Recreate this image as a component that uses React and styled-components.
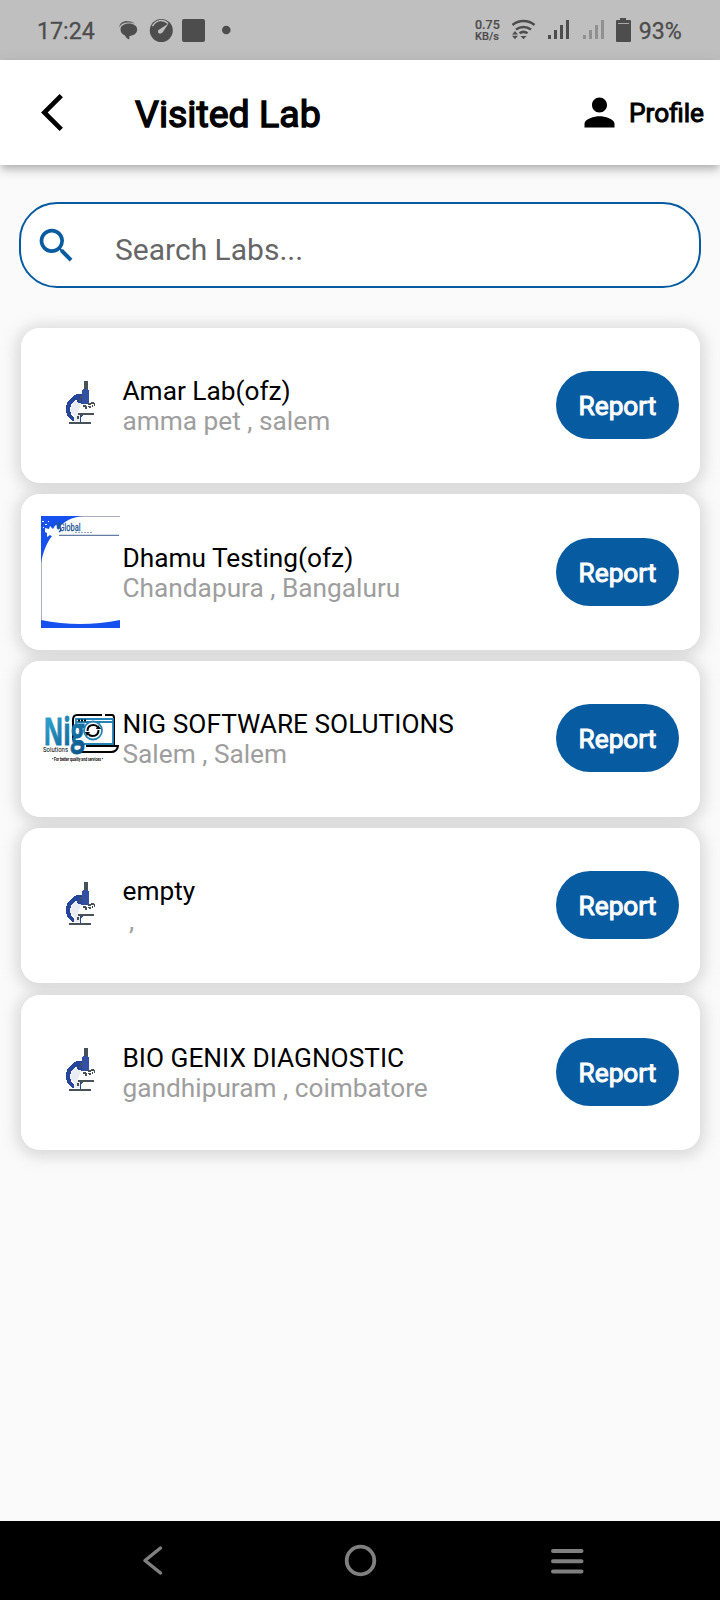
/**
 *
 * Visited Lab
 *
 */

import React from 'react';

import styled, { createGlobalStyle } from 'styled-components';

const GlobalStyle = createGlobalStyle`
  * {
    box-sizing: border-box;
  }

  body {
    margin: 0;
    background: #fafafa;
    font-family: Roboto, sans-serif;
  }

  svg {
    display: block;
    flex: none;
  }
`;

const Screen = styled.div`
  display: flex;
  flex-direction: column;
  width: 720px;
  height: 1600px;
  overflow: hidden;
  background: #fafafa;
`;

const StatusBar = styled.div`
  display: flex;
  flex: none;
  align-items: center;
  justify-content: space-between;
  height: 60px;
  padding: 0 38px 0 37px;
  background: #bfbfbf;
  color: #4d4d4d;
`;

const StatusGroup = styled.div`
  display: flex;
  align-items: center;
`;

const StatusText = styled.span`
  width: ${({ $width }) => $width}px;
  padding-top: 2px;
  font-size: 23.2px;
  line-height: 28px;
  white-space: nowrap;
  -webkit-text-stroke: 0.3px #4d4d4d;
`;

const NetSpeed = styled.div`
  width: 37px;
  font-size: 12.5px;
  font-weight: 500;
  line-height: 12px;
  -webkit-text-stroke: 0.2px #4d4d4d;

  small {
    display: block;
    font-size: 11px;
    line-height: 11px;
  }
`;

const Header = styled.header`
  position: relative;
  display: flex;
  flex: none;
  align-items: center;
  height: 105px;
  padding: 0 16px 0 41px;
  background: #fff;
  box-shadow: 0 4px 7px -2px rgba(0, 0, 0, 0.2),
    0 7px 9px rgba(0, 0, 0, 0.1), 0 2px 16px rgba(0, 0, 0, 0.08);
`;

const Title = styled.h1`
  flex: 1;
  margin: 3px 0 0 72px;
  font-size: 37.5px;
  font-weight: 400;
  line-height: 44px;
  -webkit-text-stroke: 1.4px #000;
`;

const ProfileButton = styled.button`
  display: flex;
  align-items: center;
  gap: 6.5px;
  padding: 0;
  border: 0;
  background: none;
  font-family: inherit;
  font-size: 26.25px;
  color: #000;
  -webkit-text-stroke: 1px #000;
`;

const SearchBox = styled.label`
  display: flex;
  flex: none;
  align-items: center;
  width: 682px;
  height: 86px;
  margin: 37px 0 0 19px;
  padding-left: 13px;
  border: 2px solid #075ba1;
  border-radius: 38px;
  background: #fff;
`;

const SearchPlaceholder = styled.span`
  margin: 10px 0 0 36px;
  font-size: 30px;
  line-height: 36px;
  color: #666;
`;

const LabList = styled.main`
  position: relative;
  z-index: 0;
  display: flex;
  flex: 1;
  flex-direction: column;
  gap: 11.25px;
  padding: 39.5px 20.5px 0 20.5px;
`;

const Card = styled.article`
  position: relative;
  display: flex;
  flex: none;
  align-items: center;
  height: 155.5px;
  padding: 0 20.5px;
  border-radius: 19px;
  background: #fff;

  /* shadow stays below the neighbouring cards */
  &::before {
    content: '';
    position: absolute;
    inset: 0;
    z-index: -1;
    border-radius: 19px;
    box-shadow: 0 2px 14px 5px rgba(158, 158, 158, 0.34);
  }
`;

const Logo = styled.div`
  display: flex;
  flex: none;
  align-items: center;
  justify-content: center;
  width: 79px;
  height: 114px;
  margin-right: 2.5px;
`;

const LabInfo = styled.div`
  flex: 1;
  padding-top: 1.4px;
  font-size: 26.25px;
  line-height: 30px;
  white-space: pre;
`;

const LabName = styled.div`
  color: #000;
`;

const LabPlace = styled.div`
  color: #9e9e9e;
`;

const ReportButton = styled.button`
  width: 123px;
  height: 68px;
  margin-top: -0.6px;
  padding: 2px 0 0;
  border: 0;
  border-radius: 34px;
  background: #075ba1;
  font-family: inherit;
  font-size: 26.25px;
  color: #fff;
  -webkit-text-stroke: 1px #fff;
`;

const NavBar = styled.nav`
  display: flex;
  flex: none;
  align-items: center;
  justify-content: space-between;
  height: 79px;
  padding: 0 134px;
  background: #000;
`;

function NotificationIcons() {
  return (
    <svg width="114" height="26" viewBox="118 17 114 26" fill="#4d4d4d">
      <path
        d="M119.500 27.500c-.5-4 3-6.500 7.500-6.500 3.500 0 6 1 7.500 2.500-3.500-1-7-1.500-10.500-.3-2.500.8-4 2.300-4.500 4.300z"
        opacity=".85"
      />
      <path d="M120.500 29.500c0-3.500 3.500-6 8.500-6 4.500 0 8.200 2.500 8.200 6s-3.200 6-7.700 6.500l-.3 3.500c-2.200-1-3.700-2.500-4.200-4-2.500-1-4.500-3-4.500-6z" />
      <circle cx="161.300" cy="30.500" r="11.500" />
      <path
        d="M152.500 26c4-6.500 11-7 15.500-2.500"
        fill="none"
        stroke="#bfbfbf"
        strokeWidth="1.500"
      />
      <path
        d="M168.500 23.500l-10 6.500c-2 3 1.500 5 4 2.500z"
        fill="#bfbfbf"
      />
      <rect x="182" y="19" width="23" height="23" rx="2" />
      <circle cx="226.300" cy="30" r="4.300" />
    </svg>
  );
}

function ConnectionIcons() {
  return (
    <svg width="122" height="26" viewBox="512 17 122 26" fill="#4d4d4d">
      <g fill="none" stroke="#4d4d4d" strokeWidth="2.500">
        <path d="M512.500 25c6-5.300 16-5.300 22 0" />
        <path d="M516 29.500c4.500-3.500 10.500-3.500 15 0" />
        <path d="M519.500 33.300c2.500-1.800 5.500-1.800 8 0" />
      </g>
      <path d="M512 34.500l3-3.500 3 3.500zM512 35.700h6l-3 3.500zM520.500 36h6l-3 3.300z" />
      <path d="M548 35h3v4h-3zM554 30h3v9h-3zM560 25h3v14h-3zM566 20h3v19h-3z" />
      <path
        d="M583 35h3v4h-3zM589 30h3v9h-3zM595 25h3v14h-3zM601 20h3v19h-3z"
        fill="#909090"
      />
      <path d="M620 18h6v2h4q1 0 1 1v20q0 1-1 1h-13q-1 0-1-1V21q0-1 1-1h3z" />
      <path d="M618 23.500h11" stroke="#aaa" strokeWidth="1" />
    </svg>
  );
}

function MicroscopeLogo() {
  return (
    <svg
      width="31"
      height="48"
      viewBox="65 381 31 48"
      shapeRendering="crispEdges"
    >
      <path d="M73 402l5-2 3 4-3 8v3l3 1v5h-8l2-4-5-6z" fill="#e9ecf2" />
      <path
        d="M82 394h-5l-5 3-4 4-2 5v6l2 5 4 4h2v-3l-3-4-1-4 1-5 3-4 4-2h4z"
        fill="#25459b"
      />
      <path d="M84 381h4v8h-4z" fill="#465158" />
      <path d="M83 389h5l1 2v13h-7v-13z" fill="#3450a2" />
      <path d="M77 396l5-1v9l-5-2z" fill="#25459b" />
      <path d="M80 396h2v2h-2zM79 399h2v2h-2z" fill="#465158" />
      <path
        d="M83 405h3v1h1v3h-2v-2h-2zM87 403h4v2h-3zM88 406h3v2h-2v-1h-1zM91 402h3v1h1v3h-1v-2h-3zM92 405h1v2h-1z"
        fill="#465158"
      />
      <path d="M78 413h16v2H83l-1 2h-2v-2h-2zM69 422h22v2H69z" fill="#465158" />
      <path d="M80 415h1v7h-1z" fill="#25459b" />
      <path d="M77 416h2v3h-2z" fill="#465158" />
    </svg>
  );
}

function GlobalLogo() {
  return (
    <svg width="79" height="112" viewBox="0 0 79 112">
      <path d="M.5 0v112M0 .5h79" stroke="#aab0bd" strokeWidth="1" />
      <path
        d="M0 0h42C32 1 26 4 20 9l-3 6-5 4C5 27 2 37 0 47z"
        fill="#1650ee"
      />
      <path
        d="M4 12l4 1 1-3 3 3 3-5 2 6 3-2 1 5-4 3-5 1-3-2-3 2v-4l-2-1z"
        fill="#fff"
      />
      <path
        d="M1 5h2v1H1zM4 8h2v1H4zM2 11h1v1H2zM7 5h1v1H7z"
        fill="#fff"
      />
      <path
        d="M14 9c4-5 5 1 2 3 5-1 5 2 2 4"
        fill="none"
        stroke="#1d55a4"
        strokeWidth="1.500"
      />
      <text
        x="18.500"
        y="14.500"
        fontSize="10.500"
        textLength="21"
        lengthAdjust="spacingAndGlyphs"
        fill="#245796"
        stroke="#245796"
        strokeWidth=".3"
      >
        Global
      </text>
      <path d="M34 16.500h18" stroke="#8eabc8" strokeDasharray="2 1" />
      <path d="M18 19.300h60" stroke="#3e5a8e" />
      <path d="M0 104q39 8 79 0v8H0z" fill="#1650ee" />
    </svg>
  );
}

function NigLogo() {
  return (
    <svg width="79" height="56" viewBox="41 711 79 56">
      <defs>
        <linearGradient id="nig" x1="0" y1="0" x2="1" y2="1">
          <stop offset="0" stopColor="#35b2dc" />
          <stop offset="1" stopColor="#064f83" />
        </linearGradient>
      </defs>
      <path
        d="M73 740v-20q0-5 4-5h25M105 715h7q2 0 2 3v28M80 752h31q6 0 7-6H86"
        fill="none"
        stroke="#000"
        strokeWidth="2"
      />
      <path
        d="M76 727v-8h37v25H84M76 722h37"
        fill="none"
        stroke="#2482b5"
        strokeWidth="1.800"
      />
      <path d="M78 720.500h8" stroke="#000" strokeWidth="2" strokeDasharray="2 1" />
      <circle
        cx="93"
        cy="730.500"
        r="9"
        fill="#fff"
        stroke="#2482b5"
        strokeWidth="1.800"
      />
      <path
        d="M87.500 731q0-6 6-6 3 0 4 2M98.500 730q0 6-6 6-3 0-4-2"
        fill="none"
        stroke="#000"
        strokeWidth="2"
      />
      <path d="M96 729h5l-3-4zM85 732h5l-3 4z" />
      <text
        x="43.500"
        y="744.500"
        fontFamily="Open Sans, sans-serif"
        fontSize="38"
        fontWeight="700"
        textLength="41"
        lengthAdjust="spacingAndGlyphs"
        fill="url(#nig)"
        stroke="url(#nig)"
        strokeWidth=".8"
      >
        Nig
      </text>
      <text x="43" y="752" fontSize="7.500" textLength="25" lengthAdjust="spacingAndGlyphs">
        Solutions
      </text>
      <text
        x="52"
        y="760.500"
        fontSize="4.500"
        fontWeight="700"
        textLength="51"
        lengthAdjust="spacingAndGlyphs"
      >
        • For better quality and services •
      </text>
    </svg>
  );
}

const labs = [
  { name: 'Amar Lab(ofz)', place: 'amma pet , salem', logo: MicroscopeLogo },
  { name: 'Dhamu Testing(ofz)', place: 'Chandapura , Bangaluru', logo: GlobalLogo },
  { name: 'NIG SOFTWARE SOLUTIONS', place: 'Salem , Salem', logo: NigLogo },
  { name: 'empty', place: ' , ', logo: MicroscopeLogo },
  {
    name: 'BIO GENIX DIAGNOSTIC',
    place: 'gandhipuram , coimbatore',
    logo: MicroscopeLogo,
  },
];

function LabCard({ name, place, logo: LogoImage }) {
  return (
    <Card>
      <Logo>
        <LogoImage />
      </Logo>

      <LabInfo>
        <LabName>{name}</LabName>
        <LabPlace>{place}</LabPlace>
      </LabInfo>

      <ReportButton>Report</ReportButton>
    </Card>
  );
}

function App() {
  return (
    <Screen>
      <GlobalStyle />

      <StatusBar>
        <StatusGroup>
          <StatusText $width={81}>17:24</StatusText>
          <NotificationIcons />
        </StatusGroup>
        <StatusGroup>
          <NetSpeed>
            0.75
            <small>KB/s</small>
          </NetSpeed>
          <ConnectionIcons />
          <StatusText $width={48}>&thinsp;93%</StatusText>
        </StatusGroup>
      </StatusBar>

      <Header>
        <svg width="22" height="45" viewBox="0 0 11.7 24">
          <path d="M11.670 3.870L9.900 2.100 0 12l9.900 9.900 1.770-1.770L3.540 12z" />
        </svg>
        <Title>Visited Lab</Title>
        <ProfileButton>
          <svg width="45" height="45" viewBox="0 0 24 24">
            <path d="M12 12c2.210 0 4-1.790 4-4s-1.790-4-4-4-4 1.790-4 4 1.790 4 4 4zm0 2c-2.670 0-8 1.340-8 4v2h16v-2c0-2.660-5.330-4-8-4z" />
          </svg>
          Profile
        </ProfileButton>
      </Header>

      <SearchBox>
        <svg width="45" height="45" viewBox="0 0 24 24" fill="#075ba1">
          <path d="M15.500 14h-.79l-.28-.27A6.471 6.471 0 0 0 16 9.500 6.500 6.500 0 1 0 9.500 16c1.610 0 3.090-.59 4.230-1.570l.27.28v.79l5 4.990L20.490 19l-4.990-5zm-6 0C7.010 14 5 11.990 5 9.500S7.010 5 9.500 5 14 7.010 14 9.500 11.990 14 9.500 14z" />
        </svg>
        <SearchPlaceholder>Search Labs...</SearchPlaceholder>
      </SearchBox>

      <LabList>
        {labs.map((lab) => (
          <LabCard key={lab.name} {...lab} />
        ))}
      </LabList>

      <NavBar>
        <svg width="38" height="38" viewBox="0 0 38 38">
          <path
            d="M26.500 6L11 18.500 26.500 31"
            fill="none"
            stroke="#808080"
            strokeWidth="3.500"
            strokeLinecap="round"
            strokeLinejoin="round"
          />
        </svg>
        <svg width="38" height="38" viewBox="0 0 38 38">
          <circle
            cx="19.500"
            cy="18.500"
            r="13.800"
            fill="none"
            stroke="#808080"
            strokeWidth="3.800"
          />
        </svg>
        <svg width="38" height="38" viewBox="0 0 38 38">
          <path
            d="M5 9h28.500M5 19.300h28.500M5 29.600h28.500"
            stroke="#808080"
            strokeWidth="4"
            strokeLinecap="round"
          />
        </svg>
      </NavBar>
    </Screen>
  );
}

export default App;
